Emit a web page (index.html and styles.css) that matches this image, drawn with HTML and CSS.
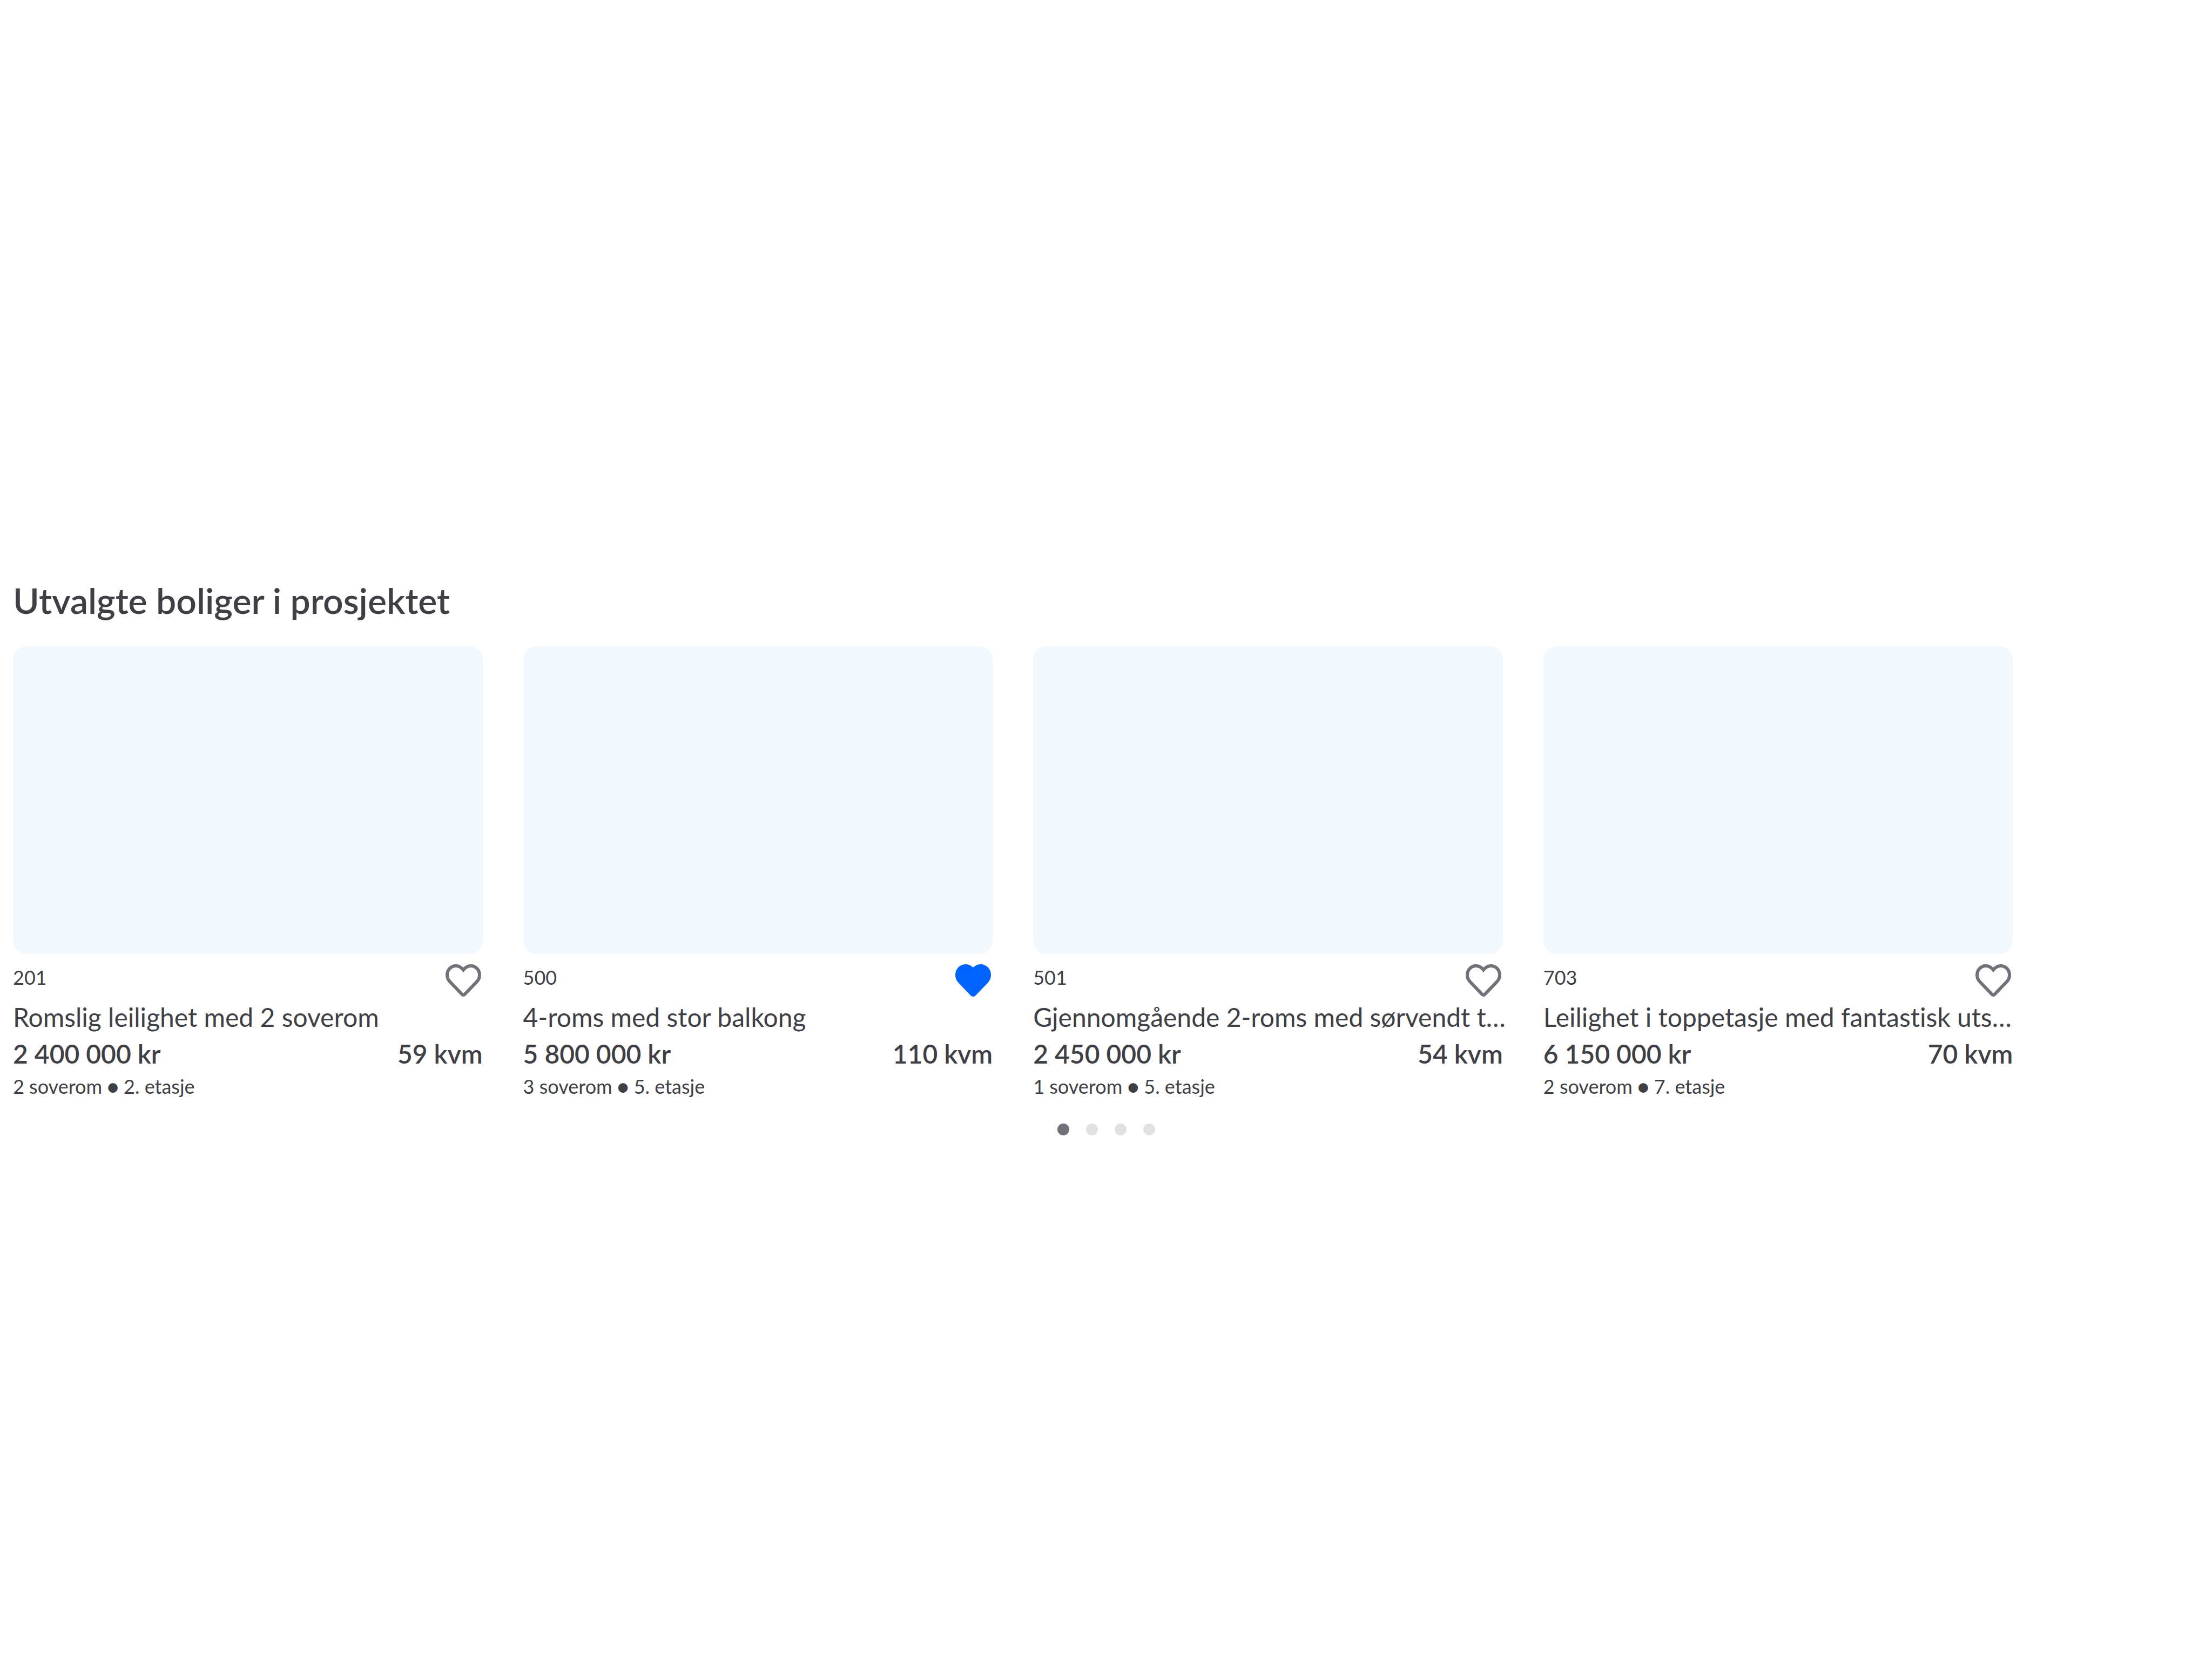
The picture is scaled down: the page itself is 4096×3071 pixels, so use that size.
FILE: index.html
```html
<!DOCTYPE html>
<html lang="no">
<head>
<meta charset="utf-8">
<title>Utvalgte boliger i prosjektet</title>
<link rel="stylesheet" href="styles.css">
</head>
<body>
<svg class="symbols" aria-hidden="true">
  <symbol id="heart" viewBox="0 0 24 24">
    <path d="M12 5.5C10.8 4 9.2 3 7.4 3 4.4 3 2 5.5 2 8.6c0 1.6.6 3.1 1.7 4.2l7.6 7.9a1 1 0 0 0 1.4 0l7.6-7.9c1.1-1.1 1.7-2.6 1.7-4.2C22 5.5 19.6 3 16.6 3 14.8 3 13.2 4 12 5.5z" stroke="currentColor" stroke-width="2"/>
  </symbol>
</svg>
<main class="project">
  <h2 class="heading">Utvalgte boliger i prosjektet</h2>
  <ul class="cards">
    <li class="card">
      <div class="photo"></div>
      <div class="top">
        <span class="number">201</span>
        <button class="fav" type="button" aria-label="Legg til favoritt" aria-pressed="false"><svg class="icon"><use href="#heart"/></svg></button>
      </div>
      <h3 class="title">Romslig leilighet med 2 soverom</h3>
      <p class="facts"><span>2 400 000 kr</span><span>59 kvm</span></p>
      <p class="details">2 soverom ● 2. etasje</p>
    </li>
    <li class="card">
      <div class="photo"></div>
      <div class="top">
        <span class="number">500</span>
        <button class="fav fav-on" type="button" aria-label="Fjern favoritt" aria-pressed="true"><svg class="icon"><use href="#heart"/></svg></button>
      </div>
      <h3 class="title">4-roms med stor balkong</h3>
      <p class="facts"><span>5 800 000 kr</span><span>110 kvm</span></p>
      <p class="details">3 soverom ● 5. etasje</p>
    </li>
    <li class="card">
      <div class="photo"></div>
      <div class="top">
        <span class="number">501</span>
        <button class="fav" type="button" aria-label="Legg til favoritt" aria-pressed="false"><svg class="icon"><use href="#heart"/></svg></button>
      </div>
      <h3 class="title">Gjennomgående 2-roms med sørvendt t…</h3>
      <p class="facts"><span>2 450 000 kr</span><span>54 kvm</span></p>
      <p class="details">1 soverom ● 5. etasje</p>
    </li>
    <li class="card">
      <div class="photo"></div>
      <div class="top">
        <span class="number">703</span>
        <button class="fav" type="button" aria-label="Legg til favoritt" aria-pressed="false"><svg class="icon"><use href="#heart"/></svg></button>
      </div>
      <h3 class="title">Leilighet i toppetasje med fantastisk uts…</h3>
      <p class="facts"><span>6 150 000 kr</span><span>70 kvm</span></p>
      <p class="details">2 soverom ● 7. etasje</p>
    </li>
  </ul>
</main>
<nav class="dots" aria-label="Sider">
  <button class="dot dot-on" type="button" aria-label="Side 1" aria-current="true"></button>
  <button class="dot" type="button" aria-label="Side 2"></button>
  <button class="dot" type="button" aria-label="Side 3"></button>
  <button class="dot" type="button" aria-label="Side 4"></button>
</nav>
</body>
</html>
```
FILE: styles.css
```css
* {
  box-sizing: border-box;
  margin: 0;
  padding: 0;
}

body {
  padding-top: 1070px;
  background: #fff;
  color: #3f3f46;
  font-family: Lato, "Open Sans", sans-serif;
  font-size: 48px;
  font-variant-ligatures: none;
}

.symbols {
  display: none;
}

.project {
  padding: 0 9% 0 24px;
}

.heading {
  margin-bottom: 43px;
  font-size: 66px;
  font-weight: 600;
  line-height: 84px;
}

.cards {
  display: grid;
  grid-template-columns: repeat(4, minmax(0, 1fr));
  gap: 75px;
  list-style: none;
}

.photo {
  aspect-ratio: 29 / 19;
  border-radius: 24px;
  background: #f1f9ff;
}

.top {
  display: flex;
  justify-content: space-between;
  align-items: flex-start;
  margin-top: 13px;
}

.number {
  font-size: 36px;
  line-height: 60px;
}

.fav {
  width: 72px;
  height: 72px;
  border: 0;
  background: none;
  color: #71717a;
  fill: none;
  cursor: pointer;
}

.fav-on {
  color: #0063fb;
  fill: currentColor;
}

.icon {
  display: block;
  width: 100%;
  height: 100%;
}

.title {
  font-size: 48px;
  font-weight: 400;
  line-height: 64px;
  white-space: nowrap;
}

.facts {
  display: flex;
  justify-content: space-between;
  font-weight: 600;
  line-height: 72px;
}

.details {
  font-size: 36px;
  line-height: 48px;
}

.dots {
  display: flex;
  justify-content: center;
  gap: 31px;
  margin-top: 45px;
}

.dot {
  width: 22px;
  height: 22px;
  border: 0;
  border-radius: 50%;
  background: #e1e1e1;
  cursor: pointer;
}

.dot-on {
  background: #71717a;
}
```
